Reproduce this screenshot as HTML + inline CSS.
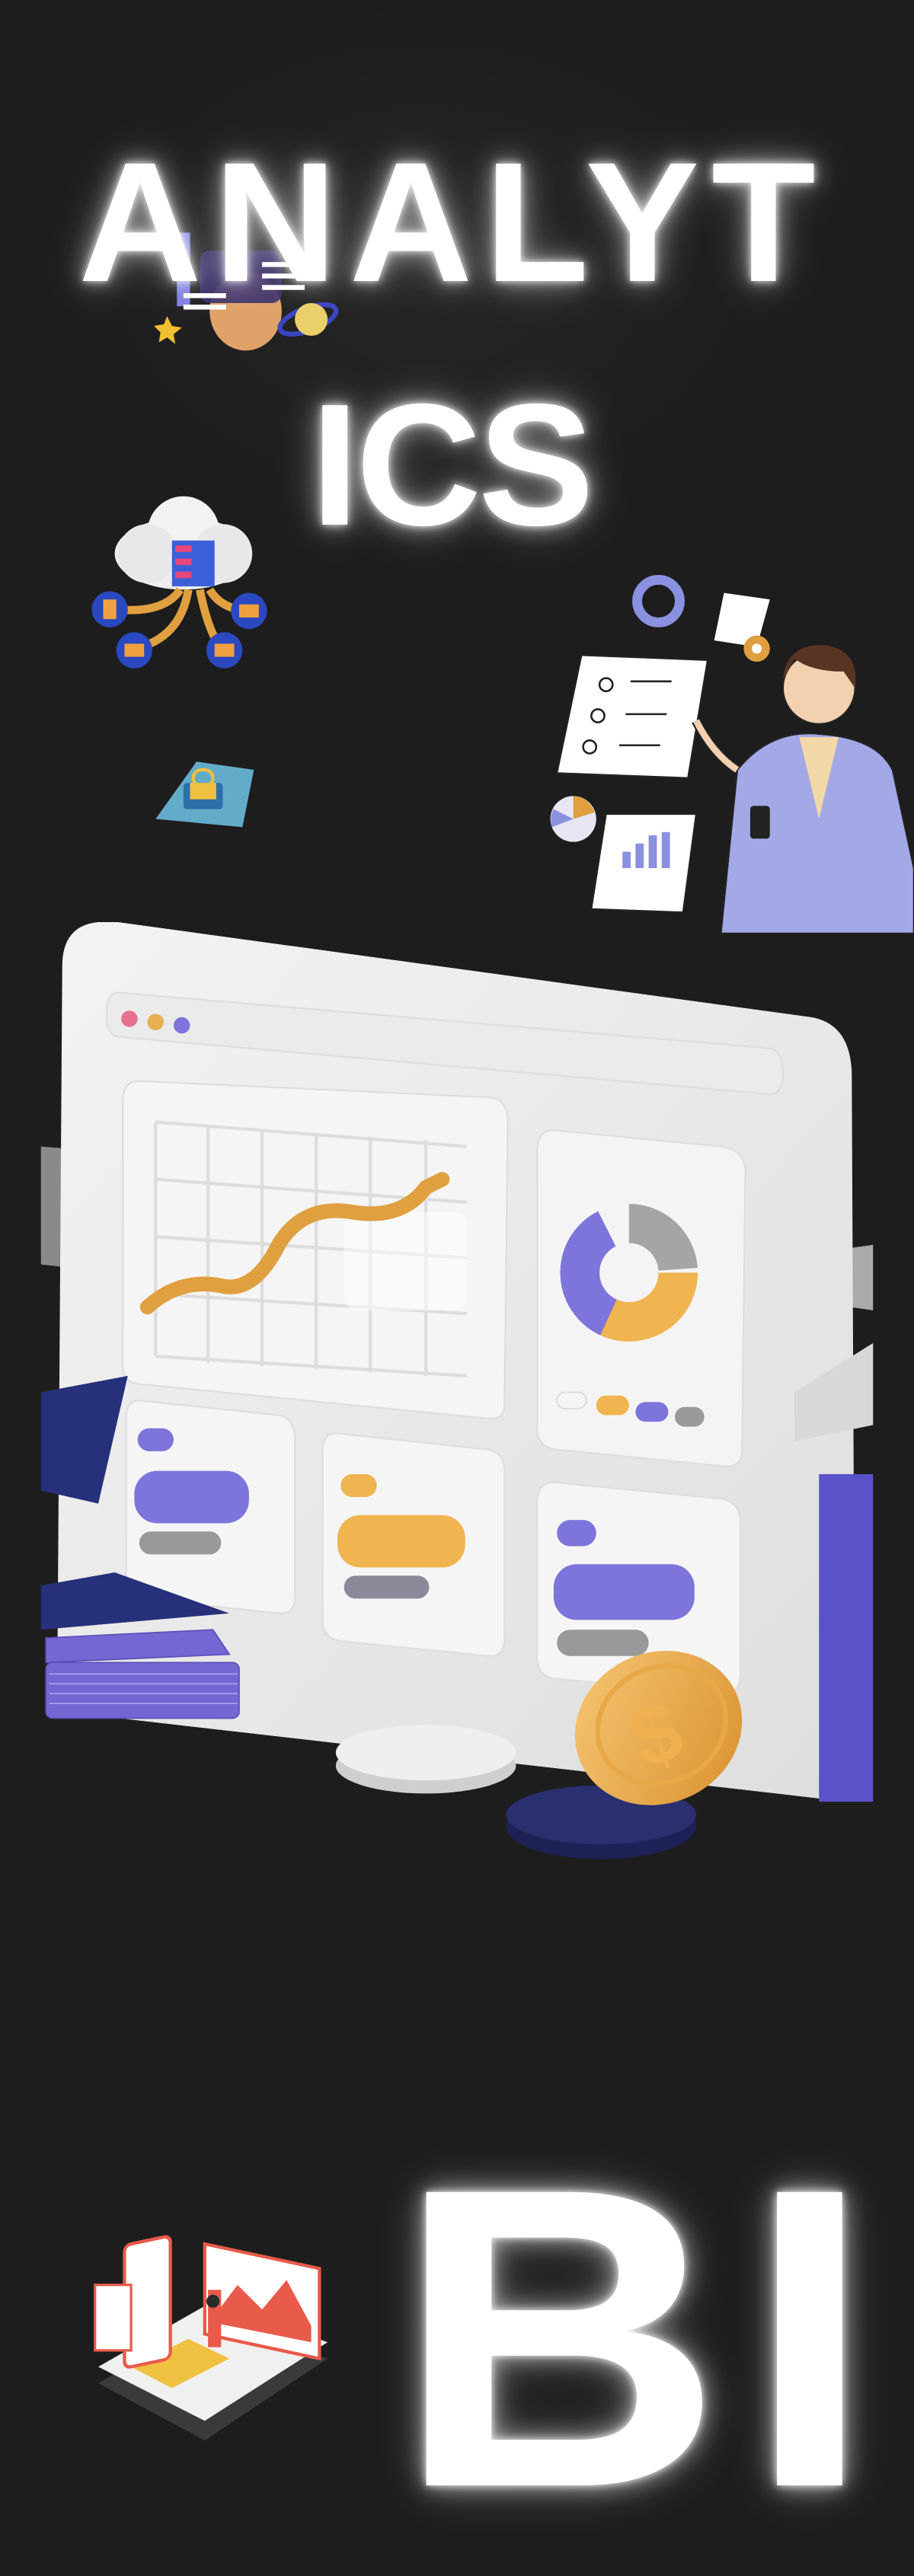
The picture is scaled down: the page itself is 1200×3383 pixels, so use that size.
<!DOCTYPE html>
<html><head><meta charset="utf-8"><style>
html,body{margin:0;padding:0;background:#1d1d1d;}
body{width:1200px;height:3375px;position:relative;overflow:hidden;
background:radial-gradient(ellipse 700px 500px at 560px 350px,#262626,#1d1d1d 70%),#1d1d1d;}
svg{position:absolute;left:0;top:0;}
.t{position:absolute;color:#fff;font-family:"Liberation Sans",Arial,sans-serif;font-weight:bold;line-height:1;white-space:nowrap;
text-shadow:0 0 10px rgba(255,255,255,.9),0 0 30px rgba(255,255,255,.6),0 0 60px rgba(255,255,255,.35);}
</style></head><body>
<svg width="1200" height="3375" viewBox="0 0 558 1569" preserveAspectRatio="none">
<defs>
<linearGradient id="pan" x1="0" y1="0" x2="1" y2="1"><stop offset="0" stop-color="#f3f3f3"/><stop offset="1" stop-color="#dedede"/></linearGradient>
<linearGradient id="gold" x1="0" y1="0" x2="1" y2="1"><stop offset="0" stop-color="#f7c774"/><stop offset="1" stop-color="#d9902e"/></linearGradient>
</defs>
<g>
<ellipse cx="150" cy="190" rx="22" ry="24" fill="#e0a268"/>
<rect x="122" y="153" width="50" height="32" rx="6" fill="#3a2f6b" opacity=".9"/>
<rect x="108" y="142" width="8" height="45" fill="#8080e0"/>
<rect x="160" y="160" width="26" height="3" fill="#fff"/><rect x="160" y="167" width="26" height="3" fill="#fff"/><rect x="160" y="174" width="26" height="3" fill="#fff"/>
<rect x="112" y="179" width="26" height="3" fill="#fff"/><rect x="112" y="186" width="26" height="3" fill="#fff"/>
<ellipse cx="188" cy="195" rx="18" ry="7" fill="none" stroke="#3a45c0" stroke-width="3" transform="rotate(-20 188 195)"/>
<circle cx="190" cy="195" r="10" fill="#ebcf6a"/>
<polygon points="102,193 105,199 111,200 106,204 107,210 102,206 97,209 98,203 94,199 100,198" fill="#f0c030"/>
</g>
<g>
<ellipse cx="112" cy="338" rx="42" ry="22" fill="#eeeeee"/>
<circle cx="112" cy="325" r="22" fill="#f2f2f2"/>
<circle cx="90" cy="338" r="18" fill="#e8e8e8"/><circle cx="136" cy="338" r="18" fill="#e8e8e8"/>
<rect x="105" y="330" width="26" height="28" fill="#3b5fd9"/>
<rect x="107" y="333" width="10" height="4" fill="#e8457a"/><rect x="107" y="341" width="10" height="4" fill="#e8457a"/><rect x="107" y="349" width="10" height="4" fill="#e8457a"/>
<path d="M110 360 Q100 375 70 372 M115 360 Q110 390 82 396 M122 360 Q128 390 137 397 M128 360 Q135 372 152 373" stroke="#e0a040" stroke-width="5" fill="none"/>
<circle cx="67" cy="372" r="11" fill="#2a48c0"/><circle cx="82" cy="397" r="11" fill="#2a48c0"/><circle cx="137" cy="397" r="11" fill="#2a48c0"/><circle cx="152" cy="373" r="11" fill="#2a48c0"/>
<rect x="63" y="366" width="8" height="12" fill="#f0a040"/><rect x="76" y="393" width="12" height="8" fill="#f0a040"/><rect x="131" y="393" width="12" height="8" fill="#f0a040"/><rect x="146" y="369" width="12" height="8" fill="#f0a040"/>
</g>
<g>
<path d="M95 500 L120 465 L155 470 L148 505 Z" fill="#6fc6e8" opacity=".85"/>
<rect x="112" y="478" width="24" height="16" rx="2" fill="#2d6fa8"/>
<rect x="118" y="470" width="12" height="10" rx="5" fill="none" stroke="#f0c040" stroke-width="2"/>
<rect x="116" y="478" width="16" height="10" fill="#f0c040"/>
</g>
<g>
<circle cx="402" cy="367" r="13" fill="none" stroke="#8a91e0" stroke-width="6"/>
<path d="M442 362 L470 366 L462 395 L436 391 Z" fill="#fff"/>
<circle cx="462" cy="396" r="8" fill="#e0a040"/><circle cx="462" cy="396" r="3" fill="#fff"/>
<path d="M355 400 L432 403 L420 475 L340 472 Z" fill="#fff" stroke="#222" stroke-width="1"/>
<g stroke="#222" stroke-width="1.2" fill="none"><circle cx="370" cy="418" r="4"/><circle cx="365" cy="437" r="4"/><circle cx="360" cy="456" r="4"/>
<path d="M385 416 H410 M382 436 H407 M378 455 H403"/></g>
<circle cx="350" cy="500" r="14" fill="#e6e6f5"/><path d="M350 500 L350 486 A14 14 0 0 1 363 496 Z" fill="#e0a040"/><path d="M350 500 L337 505 A14 14 0 0 1 338 494 Z" fill="#8a91e0"/>
<path d="M370 497 L425 497 L417 557 L361 555 Z" fill="#fff" stroke="#222" stroke-width="1"/>
<rect x="380" y="520" width="5" height="10" fill="#8a91e0"/><rect x="388" y="515" width="5" height="15" fill="#8a91e0"/><rect x="396" y="510" width="5" height="20" fill="#8a91e0"/><rect x="404" y="508" width="5" height="22" fill="#8a91e0"/>
<path d="M440 570 L450 470 Q470 445 500 448 Q535 450 545 470 L558 530 L558 570 Z" fill="#a3a8e6" stroke="#222" stroke-width="1.2"/>
<path d="M488 450 L500 500 L512 450 Z" fill="#f2d7a8"/>
<circle cx="500" cy="420" r="22" fill="#f2d1b0" stroke="#222" stroke-width="1"/>
<path d="M478 415 Q480 392 505 394 Q525 398 522 420 L515 410 Q495 410 485 402 Z" fill="#5a3422"/>
<path d="M450 470 Q435 460 425 440" stroke="#222" stroke-width="6" fill="none"/><path d="M450 470 Q435 460 425 440" stroke="#f2d1b0" stroke-width="4" fill="none"/>
<rect x="458" y="492" width="12" height="20" rx="2" fill="#222"/>
</g>
<g>
<path d="M25 700 L50 702 L52 775 L25 772 Z" fill="#8a8a8a"/>
<path d="M498 765 L533 760 L533 800 L498 795 Z" fill="#aaa"/>
<path d="M60 563 Q38 565 38 590 L35 1025 Q36 1045 55 1047 L500 1098 Q522 1100 522 1078 L520 655 Q519 625 495 621 L72 563 Z" fill="url(#pan)"/>
<path d="M485 850 L533 820 L533 870 L485 880 Z" fill="#d8d8d8"/>
<rect x="500" y="900" width="33" height="200" fill="#5b52c8"/>
<path d="M72 606 L470 640 Q478 642 478 655 Q478 668 470 668 L72 633 Q65 632 65 620 Q65 606 72 606Z" fill="#ebebeb" stroke="#ddd"/>
<circle cx="79" cy="622" r="5" fill="#e8708f"/><circle cx="95" cy="624" r="5" fill="#e8b050"/><circle cx="111" cy="626" r="5" fill="#7d75db"/>
<path d="M85 660 L300 670 Q310 672 310 685 L308 858 Q308 867 298 866 L85 845 Q75 844 75 834 L75 672 Q75 660 85 660Z" fill="#f5f5f5" stroke="#ddd"/>
<g stroke="#ddd" stroke-width="2" fill="none">
<path d="M95 685 V828 M127 688 V832 M160 690 V834 M193 692 V836 M226 694 V838 M260 696 V840 M95 685 L285 700 M95 720 L285 734 M95 755 L285 768 M95 790 L285 802 M95 828 L285 840"/>
</g>
<rect x="210" y="740" width="75" height="60" rx="8" fill="#fff" opacity=".5"/>
<path d="M90 798 Q110 780 135 785 Q155 790 170 760 Q185 735 215 740 Q245 745 260 725 L270 720" stroke="#e0a040" stroke-width="9" fill="none" stroke-linecap="round"/>
<path d="M338 690 L440 700 Q455 702 455 716 L453 885 Q453 897 440 895 L340 885 Q328 884 328 872 L328 702 Q328 690 338 690Z" fill="#f4f4f4" stroke="#ddd"/>
<circle cx="384" cy="777" r="30" fill="none" stroke="#7d75db" stroke-width="24" stroke-dasharray="75 200" transform="rotate(100 384 777)"/>
<circle cx="384" cy="777" r="30" fill="none" stroke="#f0b450" stroke-width="24" stroke-dasharray="60 200" transform="rotate(0 384 777)"/>
<circle cx="384" cy="777" r="30" fill="none" stroke="#a5a5a5" stroke-width="24" stroke-dasharray="45 200" transform="rotate(-90 384 777)"/>
<rect x="340" y="850" width="18" height="10" rx="5" fill="#f5f5f5" stroke="#ddd"/><rect x="364" y="852" width="20" height="12" rx="6" fill="#f0b450"/><rect x="388" y="856" width="20" height="12" rx="6" fill="#7d75db"/><rect x="412" y="859" width="18" height="12" rx="6" fill="#999"/>
<path d="M85 855 L170 864 Q180 866 180 878 L180 975 Q180 986 170 985 L87 976 Q77 975 77 964 L77 866 Q77 855 85 855Z" fill="#f5f5f5" stroke="#ddd"/>
<rect x="84" y="872" width="22" height="14" rx="7" fill="#7d75db"/><rect x="82" y="898" width="70" height="32" rx="14" fill="#7d75db"/><rect x="85" y="935" width="50" height="14" rx="7" fill="#999"/>
<path d="M205 875 L298 885 Q308 887 308 898 L308 1000 Q308 1012 298 1011 L208 1002 Q197 1000 197 990 L197 886 Q197 875 205 875Z" fill="#f5f5f5" stroke="#ddd"/>
<rect x="208" y="900" width="22" height="14" rx="7" fill="#f0b450"/><rect x="206" y="925" width="78" height="32" rx="14" fill="#f0b450"/><rect x="210" y="962" width="52" height="14" rx="7" fill="#8a8a9a"/>
<path d="M338 905 L440 915 Q452 917 452 930 L452 1022 Q452 1035 440 1034 L340 1025 Q328 1024 328 1012 L328 917 Q328 905 338 905Z" fill="#f5f5f5" stroke="#ddd"/>
<rect x="340" y="928" width="24" height="16" rx="8" fill="#7d75db"/><rect x="338" y="955" width="86" height="34" rx="14" fill="#7d75db"/><rect x="340" y="995" width="56" height="16" rx="8" fill="#999"/>
<path d="M25 850 L78 840 L60 918 L25 910 Z" fill="#27307a"/>
<g fill="#7467d4" stroke="#5a50b8" stroke-width=".8">
<rect x="28" y="1015" width="118" height="34" rx="4"/>
<path d="M28 1000 L130 995 L140 1010 L28 1015Z"/>
</g>
<path d="M25 968 L70 960 L140 985 L25 995Z" fill="#27307a"/>
<g stroke="#a99ff0" stroke-width=".8"><path d="M30 1022 H145 M30 1028 H145 M30 1034 H145 M30 1040 H145"/></g>
<ellipse cx="260" cy="1078" rx="55" ry="17" fill="#cfcfcf"/><ellipse cx="260" cy="1070" rx="55" ry="17" fill="#efefef"/>
<ellipse cx="367" cy="1115" rx="58" ry="20" fill="#1e2155"/><ellipse cx="367" cy="1108" rx="58" ry="18" fill="#2a2f70"/>
<ellipse cx="402" cy="1055" rx="52" ry="46" fill="url(#gold)" transform="rotate(-25 402 1055)"/>
<ellipse cx="404" cy="1053" rx="40" ry="35" fill="none" stroke="#e8a846" stroke-width="3" transform="rotate(-25 404 1053)"/>
<text x="385" y="1075" font-family="Liberation Sans,sans-serif" font-weight="bold" font-size="52" fill="#f0b050" transform="rotate(-20 405 1055)">$</text>
</g>
<g>
<path d="M60 1455 L130 1415 L200 1440 L125 1490 Z" fill="#3a3a3a"/>
<path d="M60 1445 L130 1405 L200 1430 L125 1478 Z" fill="#f0f0f0"/>
<path d="M80 1445 L115 1428 L140 1440 L105 1458 Z" fill="#f0c040"/>
<rect x="76" y="1367" width="28" height="75" rx="4" fill="#fff" stroke="#e85a4a" stroke-width="2" transform="skewY(-12) translate(0 20)"/>
<rect x="58" y="1395" width="22" height="40" fill="#fff" stroke="#e85a4a" stroke-width="1.5"/>
<path d="M125 1370 L195 1385 L195 1440 L125 1425 Z" fill="#fff" stroke="#e85a4a" stroke-width="2"/>
<path d="M130 1415 L145 1395 L160 1410 L175 1392 L190 1420 L190 1430 L130 1418Z" fill="#e85a4a"/>
<rect x="127" y="1398" width="8" height="35" fill="#e85a4a"/>
<circle cx="130" cy="1405" r="4" fill="#2a2a2a"/>
</g>
</svg>
<div class="t" style="left:103px;top:180px;font-size:224px;letter-spacing:16px;">ANALYT</div>
<div class="t" style="left:408px;top:497px;font-size:228px;letter-spacing:-4px;">ICS</div>
<div class="t" style="left:520px;top:2790px;font-size:560px;letter-spacing:30px;transform:scaleX(1.06);transform-origin:left top;">BI</div>
</body></html>
